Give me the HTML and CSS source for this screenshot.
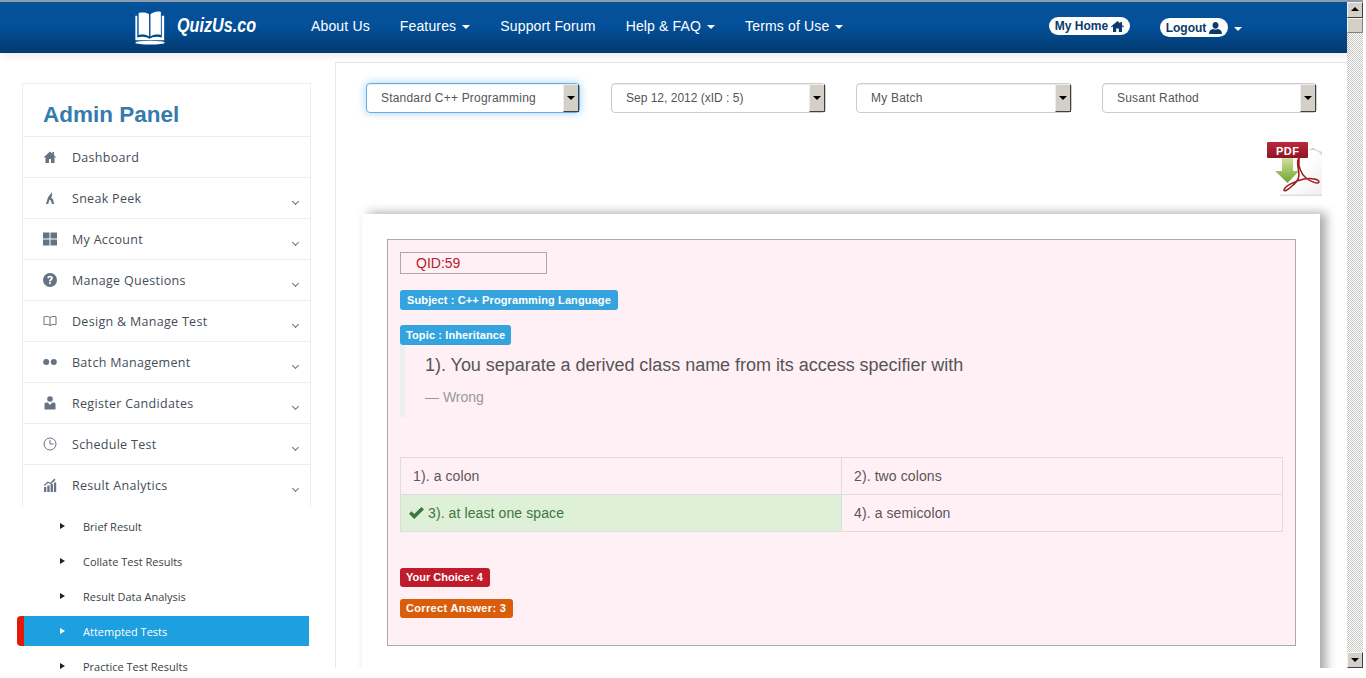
FILE: index.html
```html
<!DOCTYPE html>
<html lang="en">
<head>
  <meta charset="UTF-8" />
  <title>QuizUs.co - Attempted Tests</title>
  <link rel="stylesheet" href="styles.css">
</head>
<body>
  <div class="shell">
    <div class="page">
      <header class="topbar">
        <a class="logo">
          <svg class="logo-icon" width="32" height="34" viewBox="0 0 33 36">
            <path fill="#fff" d="M1 5h2v23c5-1.500 10-1 13 1.500 3-2.500 8-3 13-1.500V5h2.500v26H1z"/>
            <path fill="#fff" d="M4.500 2c4-1 9-.5 11 1.500V27c-3-2-7-2.500-11-1.500zM17 3.500C19 1.500 24-.5 28 1v24.500c-4-1-8-.5-11 1.500z"/>
            <ellipse cx="16.500" cy="33.500" rx="15.500" ry="2" fill="#fff"/>
          </svg>
          <span class="logo-text">QuizUs.co</span>
        </a>
        <nav class="main-nav">
          <a>About Us</a>
          <a>Features <i class="caret"></i></a>
          <a>Support Forum</a>
          <a>Help &amp; FAQ <i class="caret"></i></a>
          <a>Terms of Use <i class="caret"></i></a>
        </nav>
        <div class="user-nav">
          <a class="pill home-pill">My Home
            <svg width="13" height="11" viewBox="0 0 13 11"><path fill="#0b3a6e" d="M6.500 0 0 5.600l.7.800L2 5.300V11h3.200V7.500h2.600V11H11V5.300l1.300 1.100.7-.8L11 3.900V1H9.300v1.400z"/></svg>
          </a>
          <a class="pill logout-pill">Logout
            <svg width="13" height="12" viewBox="0 0 13 12"><path fill="#0b3a6e" d="M6.500 0C8.300 0 9.500 1.300 9.500 3.200S8.300 6.800 6.500 6.800 3.500 5.100 3.500 3.200 4.700 0 6.500 0zM0 12c0-3 1.500-4.500 4.300-5 1.300.8 3.100.8 4.400 0 2.800.5 4.300 2 4.300 5z"/></svg>
          </a>
          <i class="caret"></i>
        </div>
      </header>

      <div class="content">
        <aside class="sidebar">
          <div class="side-box">
            <h2 class="side-title">Admin Panel</h2>
            <a class="side-item">
              <svg class="side-icon" viewBox="0 0 14 14"><path d="M7 1.500 1 7l.7.700L2.500 7v6h3.500V9h2v4h3.500V7l.8.700.7-.7L11 5.200V2H9.500v1.800z"/></svg>
              Dashboard
            </a>
            <a class="side-item">
              <svg class="side-icon" viewBox="0 0 14 14"><path d="M8.500.500c.6 2.500-3.500 4-4 7.500L3 13h2.200l1-3.500.7-1 .8 1L9 13h2.200L10 8.500 8.200 6.500C9.300 4.800 9.500 2.500 8.500.500z"/></svg>
              Sneak Peek <i class="chev"></i>
            </a>
            <a class="side-item">
              <svg class="side-icon" viewBox="0 0 14 14"><path d="M0 .500h6.500v6H0zM7.500 .500H14v6H7.500zM0 7.500h6.500v6H0zM7.500 7.500H14v6H7.500z"/></svg>
              My Account <i class="chev"></i>
            </a>
            <a class="side-item">
              <svg class="side-icon" viewBox="0 0 14 14"><circle cx="7" cy="7" r="7"/><path fill="#fff" d="M7 2.700c-1.600 0-2.600.8-2.800 2.300l1.700.2c.1-.7.500-1 1.100-1s1 .3 1 .8c0 .9-1.800 1.200-1.800 3v.4h1.700c0-1.300 1.900-1.500 1.900-3.500C9.800 3.500 8.600 2.700 7 2.700zM6.100 9.300h1.800v1.800H6.100z"/></svg>
              Manage Questions <i class="chev"></i>
            </a>
            <a class="side-item">
              <svg class="side-icon" viewBox="0 0 14 14"><path fill="none" stroke="#667384" stroke-width="1" d="M7 3.500C5.500 2.300 3 2.300 1 2.700v8c2-.4 4.500-.4 6 .8 1.500-1.200 4-1.200 6-.8v-8c-2-.4-4.500-.4-6 .8zm0 0v8"/></svg>
              Design &amp; Manage Test <i class="chev"></i>
            </a>
            <a class="side-item">
              <svg class="side-icon" viewBox="0 0 14 14"><circle cx="3.200" cy="7" r="3"/><circle cx="10.800" cy="7" r="3"/></svg>
              Batch Management <i class="chev"></i>
            </a>
            <a class="side-item">
              <svg class="side-icon" viewBox="0 0 14 14"><circle cx="7" cy="3" r="2.800"/><path d="M1.500 13.500V8.300c0-1 .7-1.800 1.800-1.800h1.500L7 9l2.200-2.500h1.500c1.100 0 1.800.8 1.800 1.800v5.200z"/></svg>
              Register Candidates <i class="chev"></i>
            </a>
            <a class="side-item">
              <svg class="side-icon" viewBox="0 0 14 14"><circle cx="7" cy="7" r="6" fill="none" stroke="#667384" stroke-width="1"/><path fill="none" stroke="#667384" stroke-width="1" d="M7 3v4h3.500"/></svg>
              Schedule Test <i class="chev"></i>
            </a>
            <a class="side-item">
              <svg class="side-icon" viewBox="0 0 14 14"><path d="M1 9h2.300v5H1zM4.300 7.500h2.300V14H4.300zM7.600 6h2.300v8H7.600zM10.900 4.500h2.300V14h-2.300zM.7 7 4.800 3.500l2.800 1.200L11 .8l1.500.6-.6 1L8 6.200 5.200 5 1.400 8z"/></svg>
              Result Analytics <i class="chev"></i>
            </a>
          </div>
          <ul class="sub-menu">
            <li>Brief Result</li>
            <li>Collate Test Results</li>
            <li>Result Data Analysis</li>
            <li class="active">Attempted Tests</li>
            <li>Practice Test Results</li>
          </ul>
        </aside>

        <main class="main-panel">
          <div class="filters">
            <div class="select focused"><span>Standard C++ Programming</span><b class="select-btn"></b></div>
            <div class="select date"><span>Sep 12, 2012 (xID : 5)</span><b class="select-btn"></b></div>
            <div class="select batch"><span>My Batch</span><b class="select-btn"></b></div>
            <div class="select"><span>Susant Rathod</span><b class="select-btn"></b></div>
          </div>

          <div class="pdf-row">
            <svg width="56" height="57" viewBox="0 0 56 57">
              <defs>
                <linearGradient id="pageFill" x1="0" y1="0" x2="1" y2="1"><stop offset="0" stop-color="#f4f4f4"/><stop offset=".5" stop-color="#fff"/><stop offset="1" stop-color="#efefef"/></linearGradient>
                <linearGradient id="arrowFill" x1="0" y1="0" x2="0" y2="1"><stop offset="0" stop-color="#cfe0a0"/><stop offset="1" stop-color="#6fa52a"/></linearGradient>
                <linearGradient id="curlFill" x1="0" y1="0" x2="0" y2="1"><stop offset="0" stop-color="#bbb"/><stop offset="1" stop-color="#eee"/></linearGradient>
                <linearGradient id="bannerFill" x1="0" y1="0" x2="0" y2="1"><stop offset="0" stop-color="#b92a3c"/><stop offset="1" stop-color="#8e1526"/></linearGradient>
              </defs>
              <path fill="url(#pageFill)" d="M13 1h30c0 6 4 10 12 11v43H13z"/>
              <path fill="url(#curlFill)" d="M41 10c5-1 12 0 14 7v-5c-4-1-7-3-9-4z"/>
              <rect x="13" y="54.500" width="42" height="1.500" fill="#dedede"/>
              <rect x="0" y="2" width="41" height="16" rx="1" fill="url(#bannerFill)"/>
              <text x="9" y="14.500" class="pdf-label">PDF</text>
              <path fill="url(#arrowFill)" d="M15 18h11v13h6L20.500 43 8 31h7z"/>
              <path fill="none" stroke="#9c1a20" stroke-width="1.500" d="M33 18c-2 0-3 3-2 9 1 7 3 12-6 19-4 4-8 6-8 4 0-3 10-9 20-11 7-1 15 0 15 3 0 2-7 1-13-4-5-4-8-12-7-18 0-2 1-3 1-2"/>
            </svg>
          </div>

          <section class="card">
            <div class="question-box">
              <div class="qid">QID:59</div>
              <span class="badge badge-blue">Subject : C++ Programming Language</span>
              <span class="badge badge-blue topic">Topic : Inheritance</span>
              <blockquote class="question">
                <p>1). You separate a derived class name from its access specifier with</p>
                <small>&mdash; Wrong</small>
              </blockquote>
              <table class="options">
                <tr><td>1). a colon</td><td>2). two colons</td></tr>
                <tr>
                  <td class="right-answer">
                    <svg width="15" height="12" viewBox="0 0 15 12"><path fill="#3c763d" d="M5.200 12 0 6.800l2.500-2.500 2.700 2.700L12.500 0 15 2.500z"/></svg>
                    3). at least one space
                  </td>
                  <td>4). a semicolon</td>
                </tr>
              </table>
              <span class="badge badge-red">Your Choice: 4</span>
              <span class="badge badge-orange">Correct Answer: 3</span>
            </div>
          </section>
        </main>
      </div>
    </div>

    <div class="scrollbar">
      <b class="sb-btn sb-up"></b>
      <b class="sb-thumb"></b>
      <span class="sb-track"></span>
      <b class="sb-btn sb-down"></b>
    </div>
  </div>
</body>
</html>
```

FILE: styles.css
```css
* {
  box-sizing: border-box;
}
html, body {
  margin: 0;
  height: 100%;
  overflow: hidden;
}
body {
  font-family: "Liberation Sans", Arial, sans-serif;
  background: #fff;
  color: #555;
}

.shell {
  display: flex;
  width: 1363px;
  height: 678px;
}
.page {
  flex: 1;
  min-width: 0;
}

/* top bar */
.topbar {
  display: flex;
  align-items: center;
  height: 53px;
  padding-left: 134px;
  border-top: 2px solid #8c9cb0;
  background: linear-gradient(#04529a 0%, #04509a 45%, #023b70 100%);
  box-shadow: 0 3px 8px rgba(0, 0, 0, .08);
  color: #fff;
  position: relative;
}
.logo {
  display: flex;
  align-items: center;
  width: 177px;
  gap: 11px;
}
.logo-icon {
  flex: none;
  margin-top: 1px;
}
.logo-text {
  font-size: 21px;
  font-weight: bold;
  font-style: italic;
  margin-top: -5px;
  transform: scaleX(.77);
  transform-origin: left center;
}
.main-nav {
  display: flex;
  gap: 30px;
  font-size: 14px;
  letter-spacing: .15px;
  width: 738px;
  margin-top: -4px;
}
.caret {
  display: inline-block;
  width: 0;
  height: 0;
  margin-left: 2px;
  vertical-align: middle;
  border-top: 4px solid #fff;
  border-left: 4px solid transparent;
  border-right: 4px solid transparent;
}
.user-nav {
  display: flex;
  align-items: center;
  gap: 30px;
  margin-top: -1px;
}
.user-nav .caret {
  margin-left: -24px;
  margin-top: 3px;
}
.pill {
  display: flex;
  align-items: center;
  justify-content: center;
  gap: 3px;
  height: 18px;
  border-radius: 10px;
  background: #fff;
  color: #0b3a6e;
  font-size: 12px;
  font-weight: bold;
}
.home-pill {
  width: 81px;
  margin-top: -2px;
}
.logout-pill {
  width: 68px;
  height: 19px;
  margin-top: 1px;
}

/* sidebar */
.content {
  display: flex;
}
.sidebar {
  flex: none;
  width: 335px;
  padding: 30px 26px 0 17px;
}
.side-box {
  margin-left: 5px;
  margin-right: -2px;
  border: 1px solid #eceef0;
  border-bottom: 0;
  background: #fff;
}
.side-title {
  margin: 0;
  height: 53px;
  padding: 17px 0 0 20px;
  border-bottom: 1px solid #eceef0;
  color: #367bac;
  font-size: 22.500px;
  line-height: 27px;
  font-weight: bold;
}
.side-item {
  display: flex;
  align-items: center;
  height: 41px;
  padding: 0 0 0 20px;
  border-bottom: 1px solid #eceef0;
  color: #444d58;
  font-family: "Open Sans", sans-serif;
  font-size: 12.500px;
  letter-spacing: .3px;
  position: relative;
}
.side-item:last-child {
  height: 42px;
  padding-bottom: 2px;
  border-bottom: 0;
}
.side-icon {
  width: 14px;
  height: 14px;
  margin-right: 15px;
  fill: #667384;
  flex: none;
}
.chev {
  position: absolute;
  right: 12px;
  top: 21px;
  width: 5px;
  height: 5px;
  border-right: 1px solid #667384;
  border-bottom: 1px solid #667384;
  transform: rotate(45deg);
}
.sub-menu {
  list-style: none;
  margin: 0;
  padding: 4px 0 0;
  font-family: "Open Sans", sans-serif;
  font-size: 11px;
  color: #3a3f46;
}
.sub-menu li {
  display: flex;
  align-items: center;
  height: 30px;
  margin-bottom: 5px;
  padding-left: 66px;
  position: relative;
}
.sub-menu li::before {
  content: "";
  position: absolute;
  left: 43px;
  top: 12px;
  border-left: 5px solid #222;
  border-top: 3px solid transparent;
  border-bottom: 3px solid transparent;
}
.sub-menu .active {
  background: #1d9fe0;
  border-left: 7px solid #e31a06;
  border-radius: 4px 0 0 4px;
  padding-left: 59px;
  color: #fff;
}
.sub-menu .active::before {
  left: 36px;
  border-left-color: #fff;
}

/* main panel */
.main-panel {
  flex: 1;
  min-width: 0;
  height: 606px;
  margin-top: 9px;
  padding: 20px 0 0 26px;
  border-top: 1px solid #e6e6e6;
  border-left: 1px solid #e6e6e6;
  overflow: hidden;
}
.filters {
  display: flex;
  padding-left: 4px;
  gap: 30px;
}
.select {
  display: flex;
  justify-content: space-between;
  width: 215px;
  height: 30px;
  padding-left: 14px;
  border: 1px solid #ccc;
  border-radius: 4px;
  background: #fff;
  font-size: 12px;
  letter-spacing: .2px;
  line-height: 28px;
  color: #555;
  box-shadow: inset 0 1px 1px rgba(0, 0, 0, .07);
}
.select.date {
  letter-spacing: 0;
}
.select.batch {
  width: 216px;
}
.select.focused {
  width: 214px;
  margin-right: 1px;
  border-color: #66afe9;
  box-shadow: inset 0 1px 1px rgba(0, 0, 0, .07), 0 0 8px rgba(102, 175, 233, .6);
}
.select-btn {
  position: relative;
  width: 16px;
  height: 28px;
  background: #d4d0c8;
  border: 1px solid;
  border-color: #eee #404040 #404040 #eee;
}
.select-btn::after, .sb-down::after {
  content: "";
  position: absolute;
  left: 3px;
  top: 11px;
  border-top: 4px solid #000;
  border-left: 4px solid transparent;
  border-right: 4px solid transparent;
}
.pdf-row {
  display: flex;
  justify-content: flex-end;
  height: 101px;
  padding: 27px 24px 0 0;
}
.card {
  width: 958px;
  height: 500px;
  padding: 25px;
  background: #fff;
  box-shadow: 6px -1px 10px rgba(0, 0, 0, .35);
}
.question-box {
  display: flex;
  flex-direction: column;
  align-items: flex-start;
  width: 909px;
  height: 407px;
  padding: 12px 12px 0;
  border: 1px solid #aaa;
  background: #fff0f5;
}
.qid {
  width: 147px;
  height: 22px;
  padding-left: 15px;
  border: 1px solid #aaa;
  color: #b5202a;
  font-size: 14px;
  line-height: 20px;
}
.badge {
  display: block;
  height: 20px;
  padding: 0 7px;
  border-radius: 3px;
  color: #fff;
  font-size: 11px;
  line-height: 20px;
  font-weight: bold;
}
.badge-blue {
  margin-top: 16px;
  background: #35a3dd;
  letter-spacing: .12px;
}
.topic {
  margin-top: 15px;
  padding: 0 6px;
}
.question {
  width: 100%;
  height: 72px;
  margin: 0;
  padding: 9px 0 0 20px;
  border-left: 5px solid #eee;
}
.question p {
  margin: 0;
  font-size: 18px;
  line-height: 22px;
  letter-spacing: -.03px;
  color: #555;
}
.question small {
  display: block;
  margin-top: 11px;
  font-size: 14px;
  line-height: 20px;
  color: #999;
}
.options {
  width: 883px;
  margin-top: 40px;
  border-collapse: collapse;
  table-layout: fixed;
  font-size: 14px;
  letter-spacing: .1px;
  color: #5b5558;
}
.options td {
  height: 37px;
  padding: 0 12px;
  border: 1px solid #ddd;
}
.options .right-answer {
  padding-left: 8px;
  background: #dff0d8;
  color: #3c763d;
}
.right-answer svg {
  vertical-align: -1px;
}
.badge-red {
  margin-top: 36px;
  height: 19px;
  padding: 0 7px 0 6px;
  line-height: 19px;
  background: #c01b2b;
}
.badge-orange {
  margin-top: 12px;
  height: 19px;
  padding: 0 7px 0 6px;
  line-height: 19px;
  letter-spacing: .35px;
  background: #d95d0b;
}
.pdf-label {
  font-family: "Liberation Sans", sans-serif;
  font-size: 11px;
  font-weight: bold;
  letter-spacing: .5px;
  fill: #fff;
}

/* scroll bar drawn by hand */
.scrollbar {
  display: flex;
  flex-direction: column;
  flex: none;
  width: 16px;
  height: 668px;
  border-top: 2px solid #8c9cb0;
  background: conic-gradient(#c8c8c4 25%, #fff 0 50%, #c8c8c4 0 75%, #fff 0) 0 0 / 2px 2px;
}
.sb-btn, .sb-thumb {
  position: relative;
  flex: none;
  height: 16px;
  background: #d4d0c8;
  border: 1px solid;
  border-color: #f4f4f0 #404040 #404040 #f4f4f0;
}
.sb-thumb {
  height: 15px;
  border-color: #f4f4f0 #808080 #808080 #f4f4f0;
}
.sb-track {
  flex: 1;
}
.sb-up::after {
  content: "";
  position: absolute;
  left: 3px;
  top: 4px;
  border-bottom: 4px solid #000;
  border-left: 4px solid transparent;
  border-right: 4px solid transparent;
}
.sb-down::after {
  top: 5px;
}
```
